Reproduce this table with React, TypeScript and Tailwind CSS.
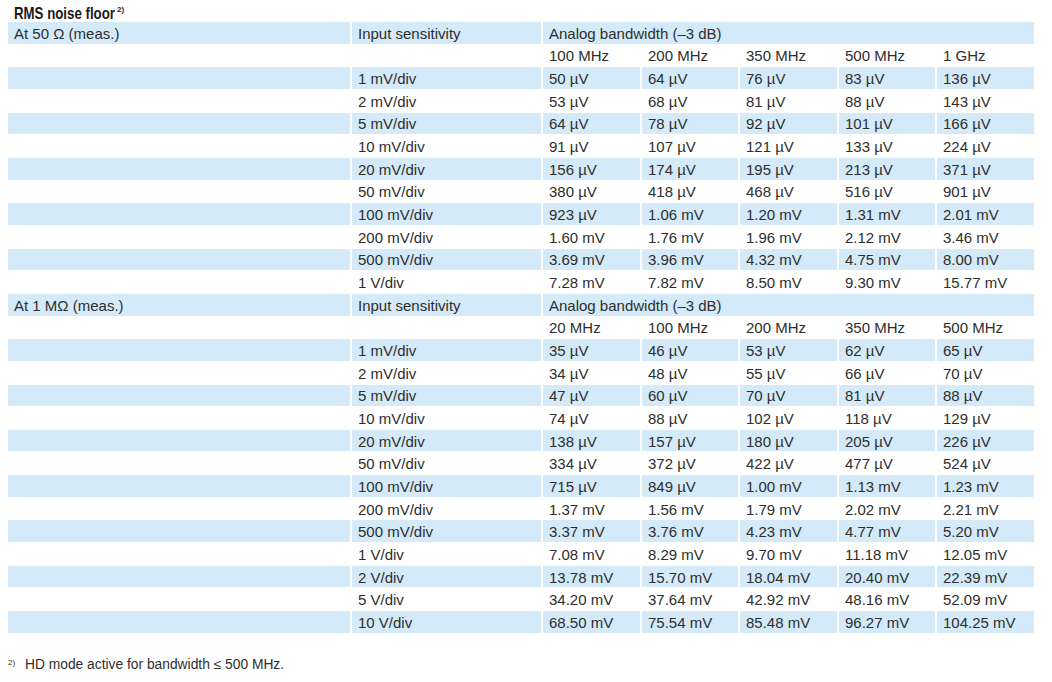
import React from "react";

const B1 = ["100 MHz", "200 MHz", "350 MHz", "500 MHz", "1 GHz"];
const D1: [string, string[]][] = [
  ["1 mV/div", ["50 µV", "64 µV", "76 µV", "83 µV", "136 µV"]],
  ["2 mV/div", ["53 µV", "68 µV", "81 µV", "88 µV", "143 µV"]],
  ["5 mV/div", ["64 µV", "78 µV", "92 µV", "101 µV", "166 µV"]],
  ["10 mV/div", ["91 µV", "107 µV", "121 µV", "133 µV", "224 µV"]],
  ["20 mV/div", ["156 µV", "174 µV", "195 µV", "213 µV", "371 µV"]],
  ["50 mV/div", ["380 µV", "418 µV", "468 µV", "516 µV", "901 µV"]],
  ["100 mV/div", ["923 µV", "1.06 mV", "1.20 mV", "1.31 mV", "2.01 mV"]],
  ["200 mV/div", ["1.60 mV", "1.76 mV", "1.96 mV", "2.12 mV", "3.46 mV"]],
  ["500 mV/div", ["3.69 mV", "3.96 mV", "4.32 mV", "4.75 mV", "8.00 mV"]],
  ["1 V/div", ["7.28 mV", "7.82 mV", "8.50 mV", "9.30 mV", "15.77 mV"]],
];
const B2 = ["20 MHz", "100 MHz", "200 MHz", "350 MHz", "500 MHz"];
const D2: [string, string[]][] = [
  ["1 mV/div", ["35 µV", "46 µV", "53 µV", "62 µV", "65 µV"]],
  ["2 mV/div", ["34 µV", "48 µV", "55 µV", "66 µV", "70 µV"]],
  ["5 mV/div", ["47 µV", "60 µV", "70 µV", "81 µV", "88 µV"]],
  ["10 mV/div", ["74 µV", "88 µV", "102 µV", "118 µV", "129 µV"]],
  ["20 mV/div", ["138 µV", "157 µV", "180 µV", "205 µV", "226 µV"]],
  ["50 mV/div", ["334 µV", "372 µV", "422 µV", "477 µV", "524 µV"]],
  ["100 mV/div", ["715 µV", "849 µV", "1.00 mV", "1.13 mV", "1.23 mV"]],
  ["200 mV/div", ["1.37 mV", "1.56 mV", "1.79 mV", "2.02 mV", "2.21 mV"]],
  ["500 mV/div", ["3.37 mV", "3.76 mV", "4.23 mV", "4.77 mV", "5.20 mV"]],
  ["1 V/div", ["7.08 mV", "8.29 mV", "9.70 mV", "11.18 mV", "12.05 mV"]],
  ["2 V/div", ["13.78 mV", "15.70 mV", "18.04 mV", "20.40 mV", "22.39 mV"]],
  ["5 V/div", ["34.20 mV", "37.64 mV", "42.92 mV", "48.16 mV", "52.09 mV"]],
  ["10 V/div", ["68.50 mV", "75.54 mV", "85.48 mV", "96.27 mV", "104.25 mV"]],
];

function Cell({ blue, children, span }: { blue: boolean; children?: React.ReactNode; span?: boolean }) {
  return (
    <div
      className={
        "flex items-center pl-[6px] pt-[1px] whitespace-nowrap " +
        (blue ? "bg-[#d4eaf9] " : "bg-white ") +
        (span ? "col-span-5" : "")
      }
    >
      {children}
    </div>
  );
}

function Block({ label, bands, data }: { label: string; bands: string[]; data: [string, string[]][] }) {
  return (
    <>
      <Cell blue>{label}</Cell>
      <Cell blue>Input sensitivity</Cell>
      <Cell blue span>
        Analog bandwidth (–3 dB)
      </Cell>
      <Cell blue={false} />
      <Cell blue={false} />
      {bands.map((b) => (
        <Cell key={b} blue={false}>
          {b}
        </Cell>
      ))}
      {data.map(([s, vals], i) => {
        const blue = i % 2 === 0;
        return (
          <React.Fragment key={s}>
            <Cell blue={blue} />
            <Cell blue={blue}>{s}</Cell>
            {vals.map((v, j) => (
              <Cell key={j} blue={blue}>
                {v}
              </Cell>
            ))}
          </React.Fragment>
        );
      })}
    </>
  );
}

export default function App() {
  return (
    <div
      className="w-[1052px] h-[682px] bg-white text-[#2e2e2e] relative"
      style={{ fontFamily: '"Liberation Sans", Arial, sans-serif' }}
    >
      <div className="h-[22px] pl-[14px] pt-[2px] flex items-start">
        <div className="w-[102px] whitespace-nowrap">
          <span className="inline-block font-bold text-[17px] leading-[19px] text-[#1a1a1a] origin-left scale-x-[0.78]">
            RMS noise floor
          </span>
        </div>
        <span className="font-bold text-[8px] leading-[10px] ml-[1px] mt-[3px] text-[#1a1a1a]">2)</span>
      </div>
      <div className="ml-[8px] grid grid-cols-[342px_189px_97px_96px_97px_96px_97px] auto-rows-[21.67px] gap-x-[2px] gap-y-[1px] text-[15px] leading-[17px]">
        <Block label="At 50 Ω (meas.)" bands={B1} data={D1} />
        <Block label="At 1 MΩ (meas.)" bands={B2} data={D2} />
      </div>
      <div className="absolute left-[8px] top-[657px] flex items-start text-[13.8px] leading-[16px]">
        <span className="text-[8px] leading-[9px] mt-[1px] w-[17px]">2)</span>
        <span>HD mode active for bandwidth ≤ 500 MHz.</span>
      </div>
    </div>
  );
}
